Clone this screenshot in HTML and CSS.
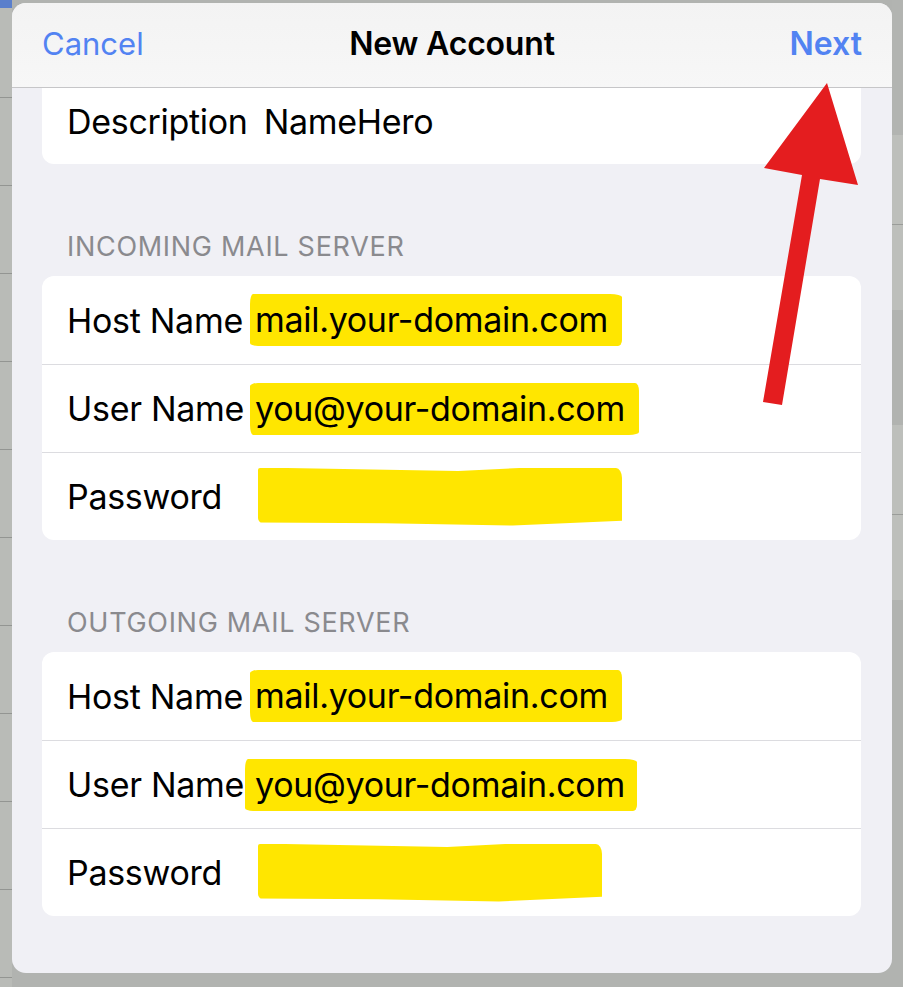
FILE: index.html
```html
<!DOCTYPE html>
<html lang="en">
<head>
    <meta charset="UTF-8">
    <meta name="viewport" content="width=device-width, initial-scale=1.0">
    <title>New Account</title>
    <link rel="stylesheet" href="styles.css">
</head>
<body>
    <div class="edge edge-left"></div>

    <div class="sheet">
        <div class="nav-bar">
            <button class="nav-btn">Cancel</button>
            <h1 class="nav-title">New Account</h1>
            <button class="nav-btn nav-btn-bold">Next</button>
        </div>

        <div class="form">
            <div class="card card-top">
                <div class="row row-short">
                    <span class="label label-auto">Description</span>
                    <span class="value">NameHero</span>
                </div>
            </div>

            <div class="section-title">INCOMING MAIL SERVER</div>
            <div class="card">
                <div class="row">
                    <span class="label">Host Name</span>
                    <span class="value mark mark-a">mail.your-domain.com</span>
                </div>
                <div class="row">
                    <span class="label">User Name</span>
                    <span class="value mark mark-b">you@your-domain.com</span>
                </div>
                <div class="row">
                    <span class="label">Password</span>
                    <span class="value mark mark-c mark-blank"></span>
                </div>
            </div>

            <div class="section-title">OUTGOING MAIL SERVER</div>
            <div class="card">
                <div class="row">
                    <span class="label">Host Name</span>
                    <span class="value mark mark-b">mail.your-domain.com</span>
                </div>
                <div class="row">
                    <span class="label">User Name</span>
                    <span class="value mark mark-a mark-wide">you@your-domain.com</span>
                </div>
                <div class="row">
                    <span class="label">Password</span>
                    <span class="value mark mark-c mark-blank mark-short"></span>
                </div>
            </div>
        </div>
    </div>

    <div class="edge edge-right"></div>

    <!-- red arrow drawn over the screenshot -->
    <svg class="arrow" viewBox="0 0 903 987" width="903" height="987">
        <polygon points="827,83 858,185 820,179 782,405 763,402 802,175 764,168" fill="#e41d1f"/>
    </svg>
</body>
</html>
```

FILE: styles.css
```css
body {
    font-family: Inter, 'Noto Sans', sans-serif;
    margin: 0;
    height: 987px;
    overflow: hidden;
    display: flex;
    background-color: #b1b3b0;
    position: relative;
}
.edge {
    height: 100%;
    flex-shrink: 0;
}
.edge-left {
    width: 12px;
    background:
        linear-gradient(#5a7fcc, #5a7fcc) top / 100% 8px no-repeat,
        repeating-linear-gradient(to bottom, #b9bbb7 0 87px, #939592 87px 88px) 0 10px;
}
.edge-right {
    width: 11px;
    background: linear-gradient(to bottom,
        #b2b4b1 0 135px, #bdbfbb 135px 224px, #9a9c99 224px 225px, #bdbfbb 225px 310px,
        #b1b3b0 310px 425px, #bdbfbb 425px 514px, #9a9c99 514px 515px, #bdbfbb 515px 600px,
        #b1b3b0 600px);
}
.sheet {
    width: 880px;
    height: 970px;
    margin-top: 3px;
    flex-shrink: 0;
    background-color: #f0f0f5;
    border-radius: 14px;
    overflow: hidden;
    display: flex;
    flex-direction: column;
}
.nav-bar {
    height: 84px;
    flex-shrink: 0;
    display: grid;
    grid-template-columns: 1fr auto 1fr;
    align-items: center;
    padding: 0 30px;
    background: linear-gradient(to bottom, #f3f3f3, #f7f7f7);
    border-bottom: 1px solid #c6c6c8;
}
.nav-btn {
    background: none;
    border: none;
    padding: 0;
    font-family: inherit;
    font-size: 31px;
    color: #5283f2;
    cursor: pointer;
    margin-bottom: 4px;
    justify-self: start;
}
.nav-btn-bold {
    font-weight: 600;
    font-size: 32px;
    justify-self: end;
}
.nav-title {
    margin: 0 0 4px;
    font-size: 32px;
    font-weight: 600;
    color: #000;
    letter-spacing: -0.2px;
}
.form {
    padding: 0 31px 0 30px;
}
.card {
    background-color: #fff;
    border-radius: 12px;
}
.card-top {
    border-radius: 0 0 12px 12px;
}
.row {
    height: 88px;
    display: flex;
    align-items: center;
    padding-left: 25px;
    font-size: 34px;
    color: #000;
    letter-spacing: -0.3px;
}
.row + .row {
    border-top: 1px solid #dcdce0;
    height: 87px;
}
.row-short {
    height: 76px;
    padding-bottom: 10px;
    box-sizing: border-box;
}
.label {
    width: 188px;
    flex-shrink: 0;
}
.label-auto {
    width: auto;
    margin-right: 16px;
}
.section-title {
    padding: 66px 0 11px 25px;
    line-height: 36px;
    font-size: 27px;
    color: #8a8a8e;
    letter-spacing: 0.7px;
}
.card + .section-title {
    padding-top: 65px;
}
.mark {
    background-color: #ffe600;
    line-height: 52px;
    padding: 0 14px 0 5px;
    margin-left: -5px;
    border-radius: 3px 12px 4px 8px / 10px 3px 6px 3px;
}
.mark-b {
    border-radius: 8px 4px 10px 3px / 3px 8px 3px 10px;
}
.mark-wide {
    padding-right: 12px;
    margin-left: -10px;
    padding-left: 10px;
}
.mark-blank {
    display: inline-block;
    width: 364px;
    height: 58px;
    padding: 0;
    margin-left: 3px;
    border-radius: 2px 6px 2px 14px / 2px 10px 3px 8px;
}
.mark-c {
    clip-path: polygon(0 0, 55% 6%, 75% 0, 100% 0, 100% 92%, 70% 100%, 35% 96%, 0 95%);
}
.mark-short {
    width: 344px;
}
.arrow {
    position: absolute;
    left: 0;
    top: 0;
    pointer-events: none;
}
```
